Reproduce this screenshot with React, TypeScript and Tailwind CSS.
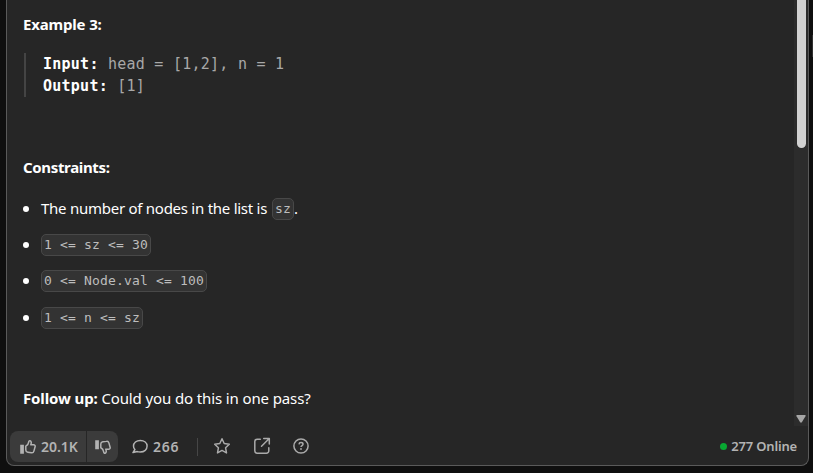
import React from "react";

const SANS = "font-['Noto_Sans','Open_Sans',sans-serif]";
const MONO = "font-['DejaVu_Sans_Mono',monospace]";

function Code({ children }: { children: React.ReactNode }) {
  return (
    <code
      className={`${MONO} inline-flex h-[22px] items-center whitespace-pre rounded-[5px] border border-[#484848] bg-[#333333] px-[2px] text-[13px] tracking-[0.17px] text-[#bdbdbd]`}
    >
      {children}
    </code>
  );
}

function Item({ children }: { children: React.ReactNode }) {
  return (
    <li className="flex h-[22px] items-center">
      <span className="mr-[12px] size-[6px] rounded-full bg-white" />
      {children}
    </li>
  );
}

function ThumbIcon({ className = "" }: { className?: string }) {
  return (
    <svg viewBox="0 0 16 16" className={`size-4 ${className}`} fill="none" stroke="#b3b3b3" strokeWidth="1.5" strokeLinejoin="round">
      <path d="M0.2 5.8h3.7v8.9H0.2z" fill="#b3b3b3" stroke="none" />
      <path d="M5.8 7.3c1.5-.7 2.5-2 2.8-4 .2-1.2.7-1.8 1.5-1.5 1.2.4 1.5 1.9.7 4h2.7c1.3 0 1.9.9 1.6 2l-1.2 4.3c-.4 1.3-1.3 1.9-2.4 1.7l-3.7-.5c-1.3-.2-2-1-2-2.2z" />
    </svg>
  );
}

export default function App() {
  return (
    <div className={`${SANS} flex h-[473px] w-[813px] overflow-hidden bg-[#0f0f0f] pl-[6px]`}>
      <main className="flex h-[466px] w-[803px] flex-col overflow-hidden rounded-b-[8px] border border-t-0 border-[#5a5a5a] bg-[#262626]">
        <div className="flex h-[426px] shrink-0 justify-between">
          <article className="pl-[16px] pt-[13px] text-[15px] leading-[22px] text-white">
            <p className="whitespace-nowrap font-bold tracking-[-0.17px]">Example 3:</p>
            <pre className={`${MONO} ml-px mt-[18px] h-[44px] border-l-2 border-[#444444] pl-[17px] text-[15px] leading-[22px] tracking-[0.25px] text-[#a8a8a8]`}>
              <b className="text-white">Input:</b>{" head = [1,2], n = 1\n"}
              <b className="text-white">Output:</b>{" [1]"}
            </pre>
            <p className="mt-[59px] font-bold tracking-[-0.34px]">Constraints:</p>
            <ul className="mt-[20px] flex flex-col gap-[14.2px]">
              <Item>
                <span className="w-[231px] whitespace-nowrap pb-[2px] tracking-[-0.26px]">The number of nodes in the list is</span>
                <Code>sz</Code>
                <span className="pb-[2px]">.</span>
              </Item>
              <Item><Code>{"1 <= sz <= 30"}</Code></Item>
              <Item><Code>{"0 <= Node.val <= 100"}</Code></Item>
              <Item><Code>{"1 <= n <= sz"}</Code></Item>
            </ul>
            <p className="mt-[58px] whitespace-pre tracking-[-0.12px]"><b>Follow up:</b> Could you do this in one pass?</p>
          </article>
          <div className="flex h-[426px] w-[14px] flex-col items-center justify-between bg-[#2c2c2c]">
            <span className="h-[148px] w-[9px] rounded-b-full bg-[#d2d2d2]" />
            <svg viewBox="0 0 10 8" className="mb-[3px] h-2 w-[10px]" fill="#a6a6a6"><path d="M1.2 0h7.6q1.4 0 .7 1.2L6 7q-1 1.5-2 0L.5 1.2Q-.2 0 1.2 0z" /></svg>
          </div>
        </div>
        <footer className="flex h-[39px] items-start pl-[3px] pt-[5px] text-[14px] font-semibold text-[#b3b3b3]">
          <div className="flex h-[31px] overflow-hidden rounded-[8px] bg-[#3b3b3b]">
            <div className="flex w-[77px] items-center border-r border-[#262626] pl-[10px]">
              <ThumbIcon />
              <span className="ml-[5px] tracking-[-0.05px]">20.1K</span>
            </div>
            <div className="flex w-[31px] items-center pl-[8px]"><ThumbIcon className="-scale-y-100" /></div>
          </div>
          <div className="flex h-[31px] items-center">
            <svg viewBox="0 0 16 16" className="ml-[14px] size-4" fill="none" stroke="#b3b3b3" strokeWidth="1.5" strokeLinejoin="round">
              <path d="M8.3 1.4C4.4 1.4 1.5 3.8 1.5 7c0 1.4.5 2.6 1.4 3.5L1 13.6l4.3-1c.9.3 1.9.4 3 .4 4 0 6.8-2.5 6.8-5.9s-2.9-5.7-6.8-5.7z" />
            </svg>
            <span className="ml-[5px] w-[27px] tracking-[0.7px]">266</span>
            <span className="ml-[17px] h-[18px] w-px bg-[#464646]" />
            <svg viewBox="0 0 18 18" className="-mt-[2px] ml-[15px] size-[18px]" fill="none" stroke="#aaaaaa" strokeWidth="1.5" strokeLinejoin="round">
              <path d="m9 1.8 2.2 4.7 5.1.7-3.7 3.6.9 5.1L9 13.4l-4.5 2.5.9-5.1-3.7-3.6 5.1-.7z" />
            </svg>
            <svg viewBox="0 0 18 18" className="-mt-[2px] ml-[22px] size-[18px]" fill="none" stroke="#aaaaaa" strokeWidth="1.5" strokeLinecap="round" strokeLinejoin="round">
              <path d="M7.3 2.2H4.2a2.4 2.4 0 0 0-2.4 2.4v9.2a2.4 2.4 0 0 0 2.4 2.4h9.2a2.4 2.4 0 0 0 2.4-2.4v-3.1M10.7 1.5h5.6v5.6M16 1.8 8.5 9.3" />
            </svg>
            <svg viewBox="0 0 18 18" className="-mt-[2px] ml-[21px] size-[18px]" fill="none" stroke="#aaaaaa" strokeWidth="1.5">
              <circle cx="9" cy="9" r="7.1" />
              <path d="M7 7.4c.1-1.2.8-1.8 2-1.8s2 .7 2 1.6c0 1.4-2 1.3-2 2.8" />
              <circle cx="9" cy="12" r=".9" fill="#aaaaaa" stroke="none" />
            </svg>
          </div>
          <div className="ml-auto flex h-[31px] items-center pr-[11px]">
            <span className="mr-[4px] size-[7px] rounded-full bg-[#08a832]" />
            <span className="text-[13px] tracking-[-0.17px]">277 Online</span>
          </div>
        </footer>
      </main>
      <span className="ml-[3px] mt-[35px] h-[22px] w-px bg-[#303030]" />
    </div>
  );
}
